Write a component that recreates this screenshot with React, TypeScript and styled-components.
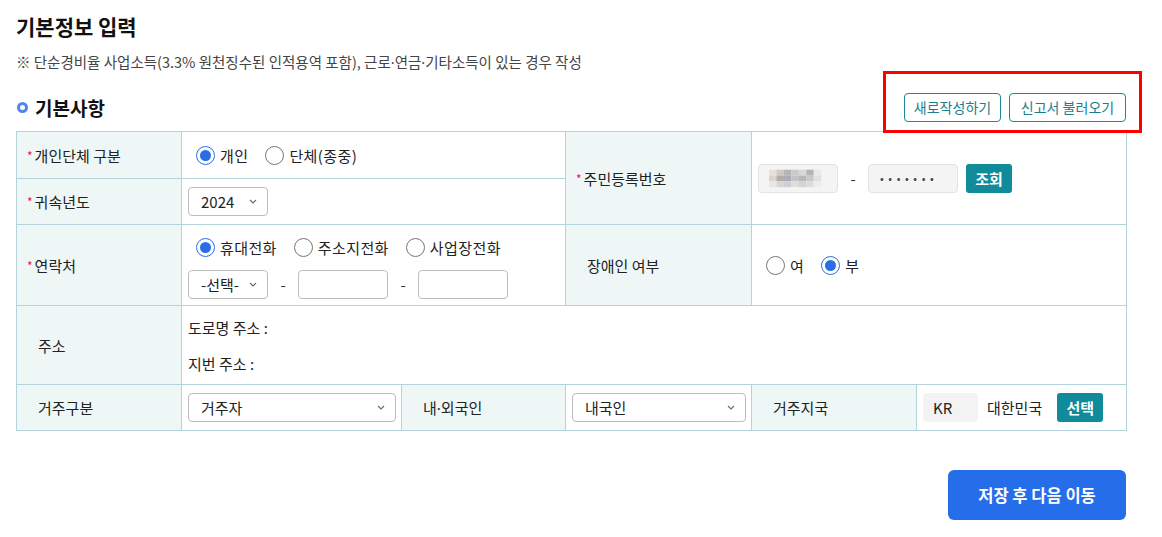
import React from "react";
import styled, { createGlobalStyle } from "styled-components";

const Global = createGlobalStyle`
  html, body { margin: 0; padding: 0; background: #fff; }
  body { font-family: "Noto Sans CJK KR", "Noto Sans", sans-serif; color: #222; }
  * { box-sizing: border-box; }
`;

const Page = styled.div`
  width: 1162px;
  padding: 12px 36px 0 16px;
`;

const Title = styled.h1`
  margin: 0;
  font-size: 21px;
  line-height: 28px;
  font-weight: 700;
  color: #111;
`;

const Notice = styled.p`
  margin: 12px 0 0;
  font-size: 14.5px;
  line-height: 20px;
  color: #444;
`;

const Mid = styled.span`
  font-family: "Noto Sans", sans-serif;
`;

const SectionRow = styled.div`
  margin-top: 21px;
  height: 28px;
  display: flex;
  align-items: center;
  justify-content: space-between;
`;

const SectionTitle = styled.h2`
  margin: 0;
  display: flex;
  align-items: center;
  gap: 7px;
  font-size: 19px;
  font-weight: 700;
  color: #111;
`;

const Ring = styled.span`
  width: 11px;
  height: 11px;
  border-radius: 50%;
  border: 3px solid #4e86f0;
  margin-left: 1px;
`;

const ButtonGroup = styled.div`
  position: relative;
  display: flex;
  gap: 8px;
`;

const Highlight = styled.div`
  position: absolute;
  top: -22px;
  left: -21px;
  right: -16px;
  bottom: -11px;
  border: 3px solid #f00;
  pointer-events: none;
`;

const OutlineButton = styled.button<{ $w: number }>`
  width: ${(p) => p.$w}px;
  height: 29px;
  border: 1px solid #1a8a98;
  border-radius: 4px;
  background: #fff;
  color: #1a7e8c;
  font-family: inherit;
  font-size: 14px;
  padding: 0;
`;

const Table = styled.table`
  margin-top: 10px;
  width: 1110px;
  border-collapse: collapse;
  table-layout: fixed;
  font-size: 15px;
`;

const Label = styled.th<{ $plain?: boolean }>`
  background: #eef7f6;
  border: 1px solid #b3d4d8;
  text-align: left;
  font-weight: 400;
  color: #222;
  padding: 0 0 0 ${(p) => (p.$plain ? 21 : 10)}px;
  vertical-align: middle;
`;

const Cell = styled.td`
  border: 1px solid #b3d4d8;
  padding: 0 6px;
  vertical-align: middle;
`;

const Row = styled.tr<{ $h: number }>`
  height: ${(p) => p.$h}px;
`;

const Star = styled.span`
  color: #e4145a;
  font-size: 12px;
  margin-right: 2px;
  position: relative;
  top: -1px;
`;

const Inline = styled.div<{ $gap?: number }>`
  display: flex;
  align-items: center;
  gap: ${(p) => p.$gap ?? 0}px;
`;

const RadioGroup = styled.div`
  display: flex;
  align-items: center;
  gap: 17px;
  padding-left: 8px;
`;

const Stack = styled.div<{ $gap: number; $top?: number }>`
  display: flex;
  flex-direction: column;
  gap: ${(p) => p.$gap}px;
  padding-top: ${(p) => p.$top ?? 0}px;
`;

const RadioLabel = styled.label`
  display: inline-flex;
  align-items: center;
  gap: 5px;
  font-size: 15px;
  color: #222;
  letter-spacing: 0.4px;
`;

const RadioCircle = styled.span<{ $on?: boolean }>`
  width: 19px;
  height: 19px;
  border-radius: 50%;
  border: 1px solid ${(p) => (p.$on ? "#2b6de8" : "#767676")};
  display: inline-flex;
  align-items: center;
  justify-content: center;
  background: #fff;
  &::after {
    content: "";
    width: 11px;
    height: 11px;
    border-radius: 50%;
    background: ${(p) => (p.$on ? "#2b6de8" : "transparent")};
  }
`;

const SelectBox = styled.div<{ $w: number }>`
  width: ${(p) => p.$w}px;
  height: 29px;
  border: 1px solid #bdbdbd;
  border-radius: 4px;
  display: flex;
  align-items: center;
  justify-content: space-between;
  padding: 0 10px 0 12px;
  font-size: 15px;
  color: #222;
  background: #fff;
`;

const TextBox = styled.div<{ $w: number; $gray?: boolean }>`
  width: ${(p) => p.$w}px;
  height: 29px;
  border: 1px solid ${(p) => (p.$gray ? "#e3e3e3" : "#bdbdbd")};
  border-radius: 4px;
  background: ${(p) => (p.$gray ? "#f4f4f4" : "#fff")};
  display: flex;
  align-items: center;
  padding: 0 10px;
  font-size: 15px;
  color: #333;
`;

const Dash = styled.span<{ $w: number }>`
  width: ${(p) => p.$w}px;
  text-align: center;
  font-size: 15px;
  color: #333;
`;

const Dots = styled.span`
  letter-spacing: 4.6px;
  font-size: 11px;
  padding-left: 1px;
  color: #444;
`;

const TealButton = styled.button<{ $ml?: number }>`
  height: 29px;
  width: 46px;
  margin-left: ${(p) => p.$ml ?? 0}px;
  border: none;
  border-radius: 3px;
  background: #0f8b99;
  color: #fff;
  font-family: inherit;
  font-size: 15px;
  font-weight: 700;
  padding: 0;
`;

const CodeBox = styled.div`
  width: 55px;
  height: 29px;
  border-radius: 4px;
  background: #f3f3f3;
  display: flex;
  align-items: center;
  padding-left: 10px;
  font-size: 15px;
  color: #222;
`;

const AddrLine = styled.div`
  font-size: 15px;
  color: #222;
`;

const Footer = styled.div`
  margin-top: 39px;
  width: 1110px;
  display: flex;
  justify-content: flex-end;
`;

const SaveButton = styled.button`
  width: 178px;
  height: 50px;
  border: none;
  border-radius: 6px;
  background: #266de9;
  color: #fff;
  font-family: inherit;
  font-size: 16.5px;
  font-weight: 700;
  padding: 0;
`;

const Chevron = () => (
  <svg width="8" height="5" viewBox="0 0 8 5">
    <path d="M1 1l3 3 3-3" fill="none" stroke="#666" strokeWidth="1.1" />
  </svg>
);

const Radio = ({ on, children }: { on?: boolean; children: React.ReactNode }) => (
  <RadioLabel>
    <RadioCircle $on={on} />
    {children}
  </RadioLabel>
);

const Select = ({ w, value }: { w: number; value: string }) => (
  <SelectBox $w={w}>
    <span>{value}</span>
    <Chevron />
  </SelectBox>
);

const mosaic = [
  ["#e4e0dd", "#cfc9c6", "#b7b4b4", "#c9c8cb", "#d9d8d8", "#b8b2ad", "#e8e8e8"],
  ["#d8d3cf", "#b4aca7", "#a9adb6", "#c3c2c4", "#b9b5b1", "#c8c7c9", "#e0e0e0"],
  ["#e9e7e6", "#d6d4d4", "#cfcfd1", "#dedede", "#d4d3d4", "#dcdcdc", "#ececec"],
];

const Blurred = () => (
  <svg width="70" height="24" viewBox="0 0 70 24">
    {mosaic.map((row, r) =>
      row.map((c, i) => <rect key={`${r}-${i}`} x={i * 9} y={r * 7 + 2} width="9" height="7" fill={c} />)
    )}
  </svg>
);

export default function App() {
  return (
    <>
      <Global />
      <Page>
        <Title>기본정보 입력</Title>
        <Notice>
          ※ 단순경비율 사업소득(3.3% 원천징수된 인적용역 포함), 근로<Mid>·</Mid>연금<Mid>·</Mid>기타소득이 있는 경우 작성
        </Notice>
        <SectionRow>
          <SectionTitle>
            <Ring />
            기본사항
          </SectionTitle>
          <ButtonGroup>
            <OutlineButton $w={97}>새로작성하기</OutlineButton>
            <OutlineButton $w={117}>신고서 불러오기</OutlineButton>
            <Highlight />
          </ButtonGroup>
        </SectionRow>

        <Table>
          <colgroup>
            <col style={{ width: 165 }} />
            <col style={{ width: 220 }} />
            <col style={{ width: 164 }} />
            <col style={{ width: 186 }} />
            <col style={{ width: 165 }} />
            <col style={{ width: 210 }} />
          </colgroup>
          <tbody>
            <Row $h={47}>
              <Label>
                <Star>*</Star>개인단체 구분
              </Label>
              <Cell colSpan={2}>
                <RadioGroup>
                  <Radio on>개인</Radio>
                  <Radio>단체(종중)</Radio>
                </RadioGroup>
              </Cell>
              <Label rowSpan={2}>
                <Star>*</Star>주민등록번호
              </Label>
              <Cell colSpan={2} rowSpan={2}>
                <Inline>
                  <TextBox $w={80} $gray>
                    <Blurred />
                  </TextBox>
                  <Dash $w={30}>-</Dash>
                  <TextBox $w={90} $gray>
                    <Dots>•••••••</Dots>
                  </TextBox>
                  <TealButton $ml={8}>조회</TealButton>
                </Inline>
              </Cell>
            </Row>
            <Row $h={46}>
              <Label>
                <Star>*</Star>귀속년도
              </Label>
              <Cell colSpan={2}>
                <Select w={80} value="2024" />
              </Cell>
            </Row>
            <Row $h={81}>
              <Label>
                <Star>*</Star>연락처
              </Label>
              <Cell colSpan={2}>
                <Stack $gap={12} $top={5}>
                  <RadioGroup>
                    <Radio on>휴대전화</Radio>
                    <Radio>주소지전화</Radio>
                    <Radio>사업장전화</Radio>
                  </RadioGroup>
                  <Inline>
                    <Select w={80} value="-선택-" />
                    <Dash $w={30}>-</Dash>
                    <TextBox $w={90} />
                    <Dash $w={30}>-</Dash>
                    <TextBox $w={90} />
                  </Inline>
                </Stack>
              </Cell>
              <Label $plain>장애인 여부</Label>
              <Cell colSpan={2}>
                <RadioGroup>
                  <Radio>여</Radio>
                  <Radio on>부</Radio>
                </RadioGroup>
              </Cell>
            </Row>
            <Row $h={79}>
              <Label $plain>주소</Label>
              <Cell colSpan={5}>
                <Stack $gap={15}>
                  <AddrLine>도로명 주소 :</AddrLine>
                  <AddrLine>지번 주소 :</AddrLine>
                </Stack>
              </Cell>
            </Row>
            <Row $h={46}>
              <Label $plain>거주구분</Label>
              <Cell>
                <Select w={208} value="거주자" />
              </Cell>
              <Label $plain>
                내<Mid>·</Mid>외국인
              </Label>
              <Cell>
                <Select w={174} value="내국인" />
              </Cell>
              <Label $plain>거주지국</Label>
              <Cell>
                <Inline $gap={9}>
                  <CodeBox>KR</CodeBox>
                  <span>대한민국</span>
                  <TealButton $ml={6}>선택</TealButton>
                </Inline>
              </Cell>
            </Row>
          </tbody>
        </Table>

        <Footer>
          <SaveButton>저장 후 다음 이동</SaveButton>
        </Footer>
      </Page>
    </>
  );
}
